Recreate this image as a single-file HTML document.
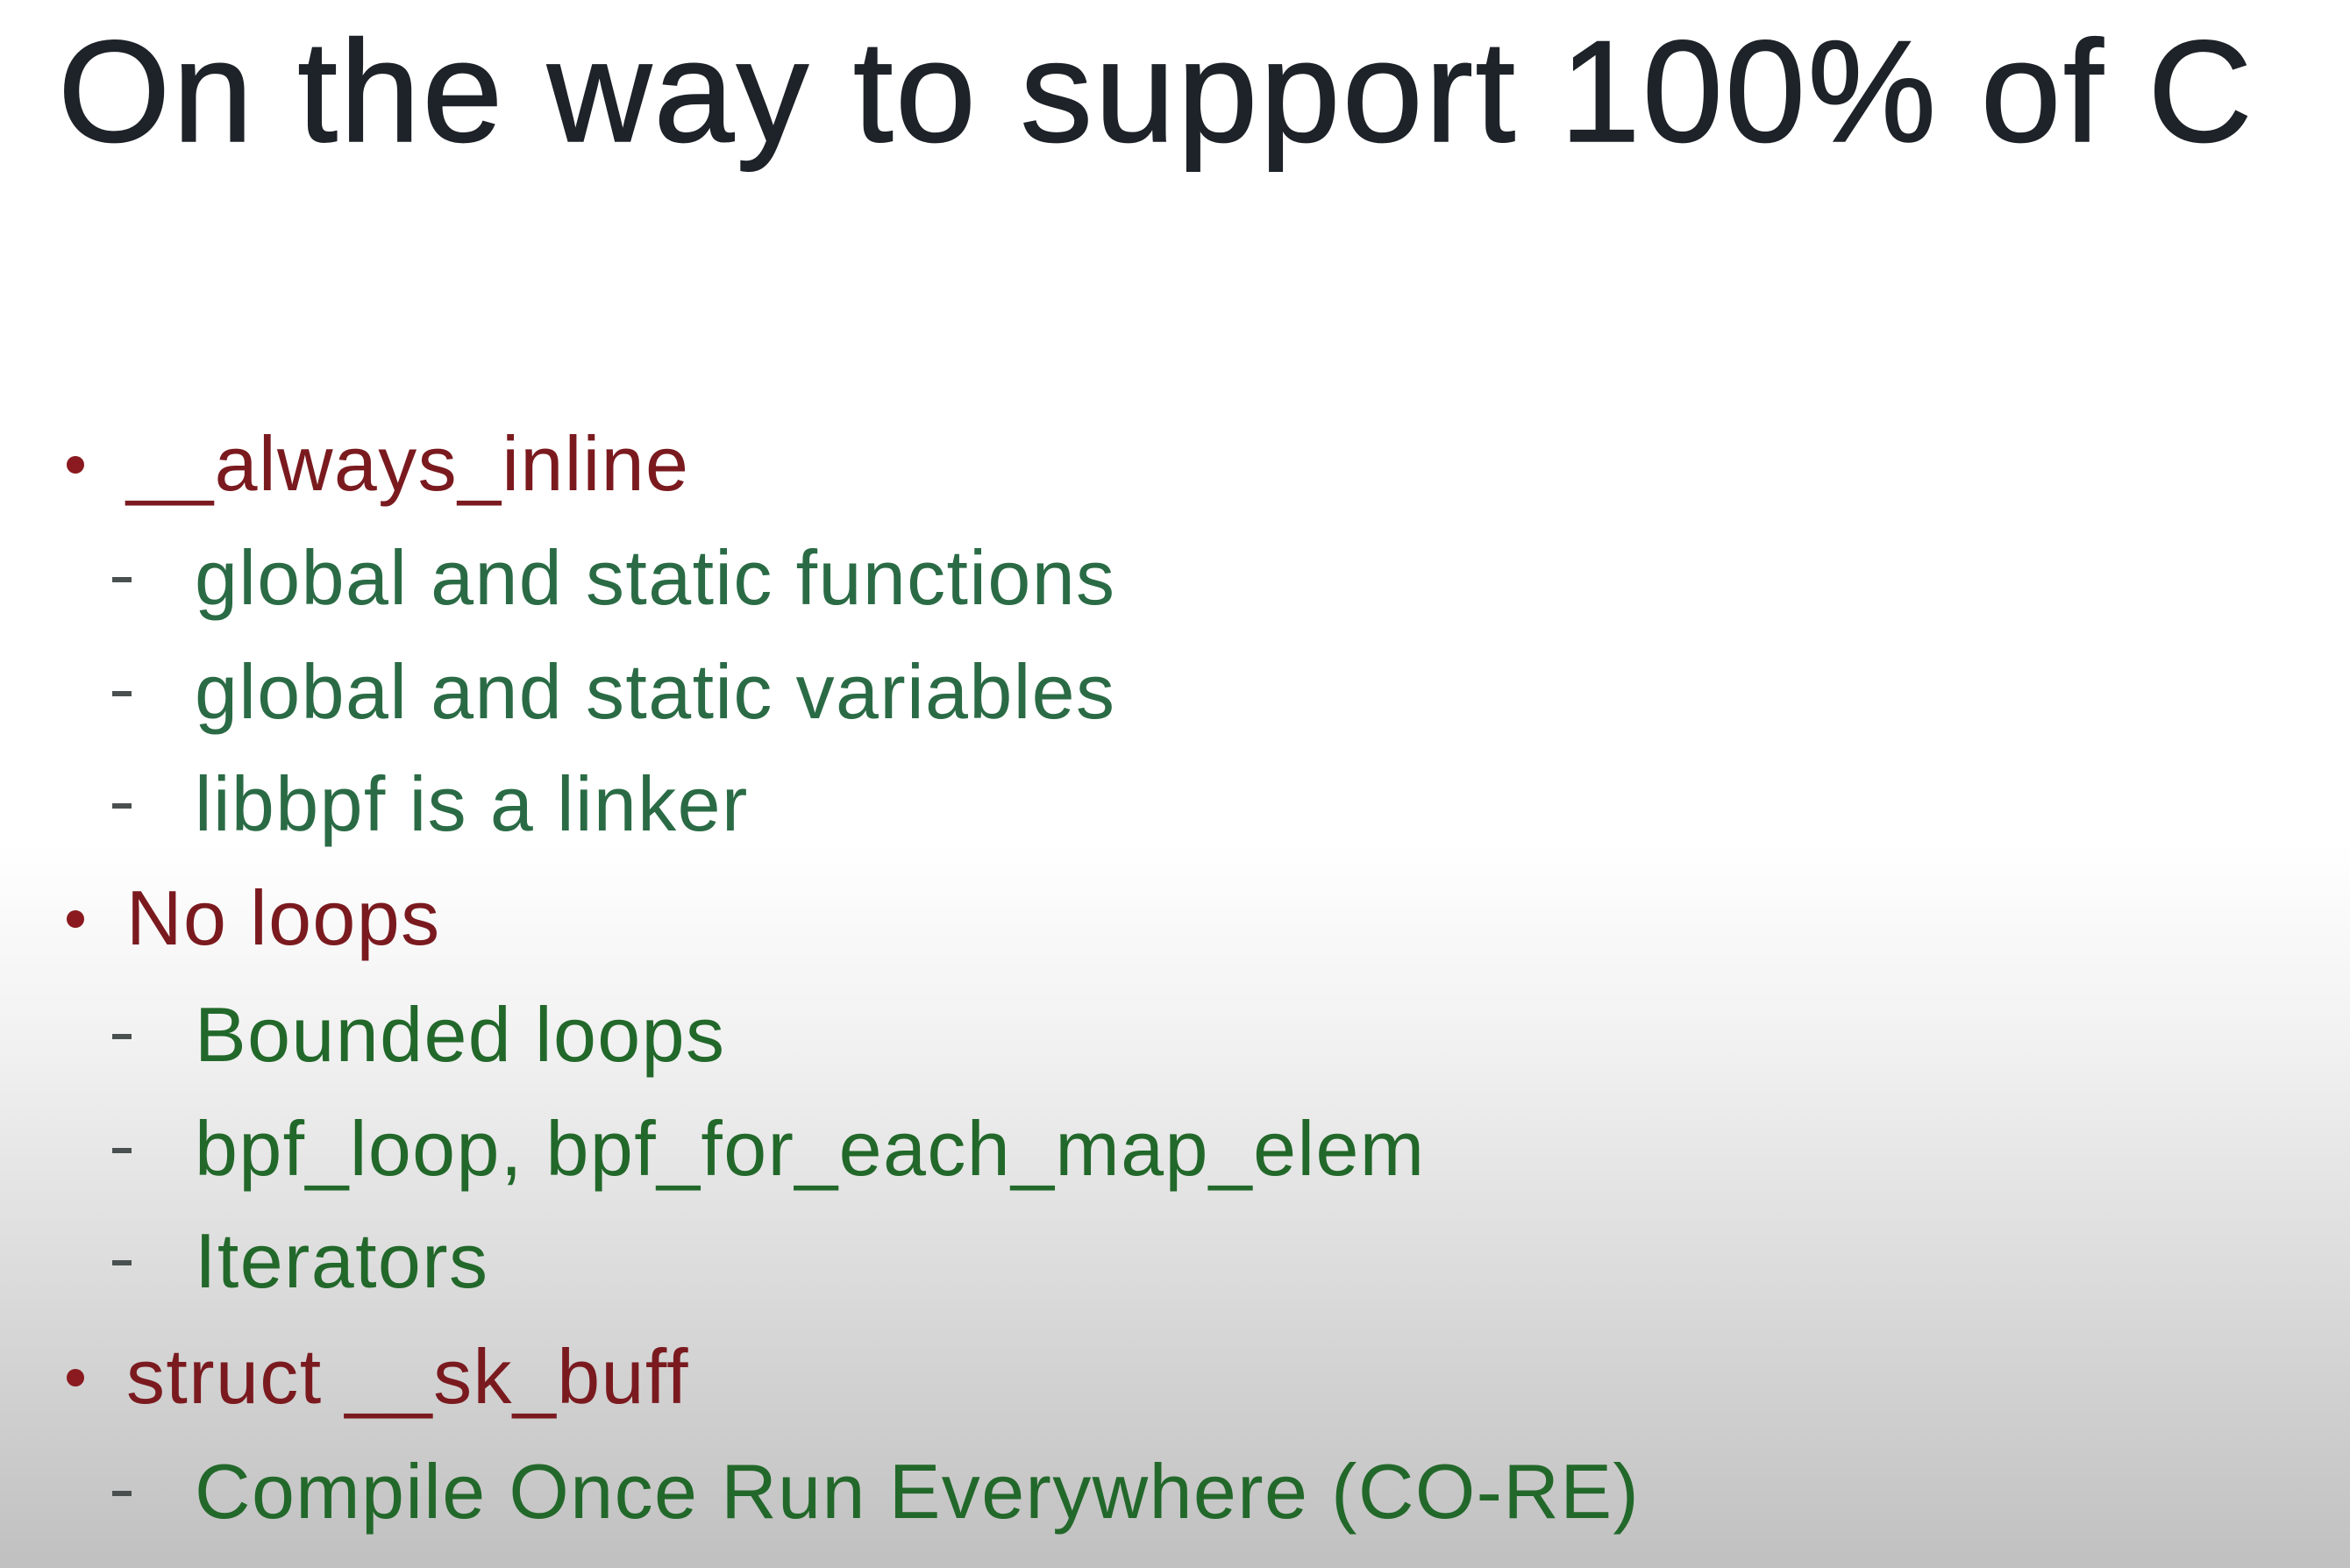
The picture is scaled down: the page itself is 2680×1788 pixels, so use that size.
<!DOCTYPE html>
<html><head><meta charset="utf-8"><style>
html,body{margin:0;padding:0}
body{width:2680px;height:1788px;position:relative;overflow:hidden;
background:linear-gradient(to bottom,#fff 0px,#fff 960px,#f2f2f2 1180px,#dcdcdc 1450px,#c4c4c4 1740px,#c0c0c0 1788px);
font-family:"Liberation Sans",sans-serif;}
.t{position:absolute;left:66px;top:22px;font-size:165px;line-height:1em;color:#1e2329;letter-spacing:2.4px;white-space:nowrap;-webkit-text-stroke:1.5px #1e2329}
.l{position:absolute;font-size:88px;line-height:1em;white-space:nowrap;letter-spacing:1.4px}
.r{color:#7a1a1f;left:144px}
.g{color:#2a6b45;left:222px}
.g2{color:#22682a;left:222px}
.b{position:absolute;left:76px;width:20px;height:20px;border-radius:50%;background:#8a1a1f}
.d{position:absolute;left:128px;width:22px;height:6px;background:#4a5050}
</style></head><body>
<div class="t">On the way to support 100% of C</div>

<div class="b" style="top:520px"></div>
<div class="l r" style="top:485px">__always_inline</div>
<div class="d" style="top:658px"></div>
<div class="l g" style="top:615px">global and static functions</div>
<div class="d" style="top:788px"></div>
<div class="l g" style="top:745px">global and static variables</div>
<div class="d" style="top:916px"></div>
<div class="l g" style="top:873px">libbpf is a linker</div>

<div class="b" style="top:1038px"></div>
<div class="l r" style="top:1003px">No loops</div>
<div class="d" style="top:1179px"></div>
<div class="l g2" style="top:1136px">Bounded loops</div>
<div class="d" style="top:1309px"></div>
<div class="l g2" style="top:1266px">bpf_loop, bpf_for_each_map_elem</div>
<div class="d" style="top:1437px"></div>
<div class="l g2" style="top:1394px">Iterators</div>

<div class="b" style="top:1561px"></div>
<div class="l r" style="top:1526px">struct __sk_buff</div>
<div class="d" style="top:1700px"></div>
<div class="l g2" style="top:1657px">Compile Once Run Everywhere (CO-RE)</div>
</body></html>
